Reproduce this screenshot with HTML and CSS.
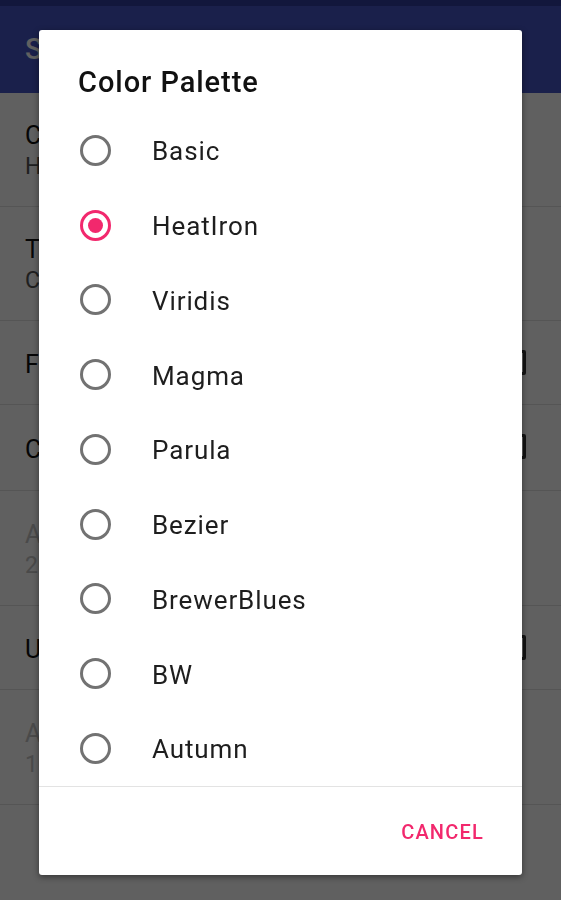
FILE: index.html
```html
<!DOCTYPE html>
<html lang="en">
<head>
<meta charset="utf-8">
<title>Settings - Color Palette</title>
<link rel="stylesheet" href="styles.css">
</head>
<body>
<div class="page">
  <div class="status-bar"></div>
  <header class="app-bar"><span class="app-title">Settings</span></header>
  <ul class="prefs">
    <li class="pref two"><span class="p-title">Color Palette</span><span class="p-sum">HeatIron</span></li>
    <li class="pref two"><span class="p-title">Temperature Unit</span><span class="p-sum">Celsius</span></li>
    <li class="pref one"><span class="p-title">Fahrenheit</span><span class="check"></span></li>
    <li class="pref one"><span class="p-title">Contrast</span><span class="check"></span></li>
    <li class="pref two disabled"><span class="p-title">Auto range</span><span class="p-sum">20 °C</span></li>
    <li class="pref one"><span class="p-title">Use overlay</span><span class="check"></span></li>
    <li class="pref two disabled"><span class="p-title">Alarm</span><span class="p-sum">100 °C</span></li>
  </ul>
</div>
<div class="scrim"></div>
<div class="dialog">
  <h1 class="d-title">Color Palette</h1>
  <ul class="options">
    <li class="opt"><span class="radio"></span><span class="label">Basic</span></li>
    <li class="opt"><span class="radio on"></span><span class="label">HeatIron</span></li>
    <li class="opt"><span class="radio"></span><span class="label">Viridis</span></li>
    <li class="opt"><span class="radio"></span><span class="label">Magma</span></li>
    <li class="opt"><span class="radio"></span><span class="label">Parula</span></li>
    <li class="opt"><span class="radio"></span><span class="label">Bezier</span></li>
    <li class="opt"><span class="radio"></span><span class="label">BrewerBlues</span></li>
    <li class="opt"><span class="radio"></span><span class="label">BW</span></li>
    <li class="opt"><span class="radio"></span><span class="label">Autumn</span></li>
  </ul>
  <div class="actions"><span class="btn">CANCEL</span></div>
</div>
</body>
</html>
```
FILE: styles.css
```css
* { box-sizing: border-box; }
html, body {
  margin: 0;
  padding: 0;
  width: 561px;
  height: 900px;
  overflow: hidden;
  font-family: Roboto, "Liberation Sans", sans-serif;
  background: #fff;
}
.page {
  width: 561px;
  height: 900px;
  display: flex;
  flex-direction: column;
  background: #fff;
}
.status-bar {
  flex: none;
  height: 6px;
  background: #303f9f;
}
.app-bar {
  flex: none;
  height: 87px;
  background: #4656c6;
  display: flex;
  align-items: center;
  padding-left: 25px;
  padding-bottom: 2px;
}
.app-title {
  color: #fff;
  font-size: 29px;
  font-weight: 500;
}
.prefs {
  flex: none;
  list-style: none;
  margin: 0;
  padding: 0;
}
.pref {
  display: flex;
  flex-direction: column;
  justify-content: center;
  padding: 0 35px 0 25px;
  border-bottom: 1px solid #e2e2e2;
  position: relative;
}
.pref.two { height: 114px; padding-top: 3px; }
.pref.one { height: 84px; padding-top: 4px; }
.pref:nth-child(4) { height: 86px; }
.pref:nth-child(5), .pref:nth-child(7) { height: 115px; }
.p-title {
  font-size: 25px;
  line-height: 31px;
  color: #111;
}
.p-sum {
  font-size: 23px;
  line-height: 31px;
  color: #555;
}
.disabled .p-title, .disabled .p-sum { color: #c4c4c4; }
.check {
  position: absolute;
  right: 35px;
  top: 29px;
  width: 25px;
  height: 25px;
  border: 3px solid #333;
  border-radius: 2px;
}
.scrim {
  position: fixed;
  inset: 0;
  background: rgba(0, 0, 0, 0.625);
}
.dialog {
  position: absolute;
  left: 39px;
  top: 30px;
  width: 483px;
  height: 845px;
  background: #fff;
  border-radius: 3px;
  box-shadow: 0 2px 6px rgba(0, 0, 0, 0.45);
  display: flex;
  flex-direction: column;
  padding-top: 34px;
}
.d-title {
  margin: 0 0 13px 39px;
  font-size: 29px;
  line-height: 36px;
  font-weight: 500;
  color: #111;
  letter-spacing: 0.95px;
}
.options {
  list-style: none;
  margin: 0;
  padding: 0;
  border-bottom: 1px solid #e3e3e3;
}
.opt {
  height: 74.75px;
  display: flex;
  align-items: center;
  padding-left: 41px;
}
.radio {
  width: 31px;
  height: 31px;
  border: 3px solid #727272;
  border-radius: 50%;
  flex: none;
  display: flex;
  align-items: center;
  justify-content: center;
}
.radio.on { border-color: #f2286d; }
.radio.on::after {
  content: "";
  width: 15px;
  height: 15px;
  border-radius: 50%;
  background: #f2286d;
}
.label {
  margin-left: 41px;
  padding-top: 2px;
  font-size: 26px;
  line-height: 30px;
  color: #1e1e1e;
  letter-spacing: 0.9px;
}
.actions {
  flex: 1;
  display: flex;
  justify-content: flex-end;
  align-items: center;
  padding-right: 38px;
  padding-top: 2px;
}
.btn {
  font-size: 20px;
  font-weight: 500;
  letter-spacing: 1.2px;
  color: #f2286d;
}
```
